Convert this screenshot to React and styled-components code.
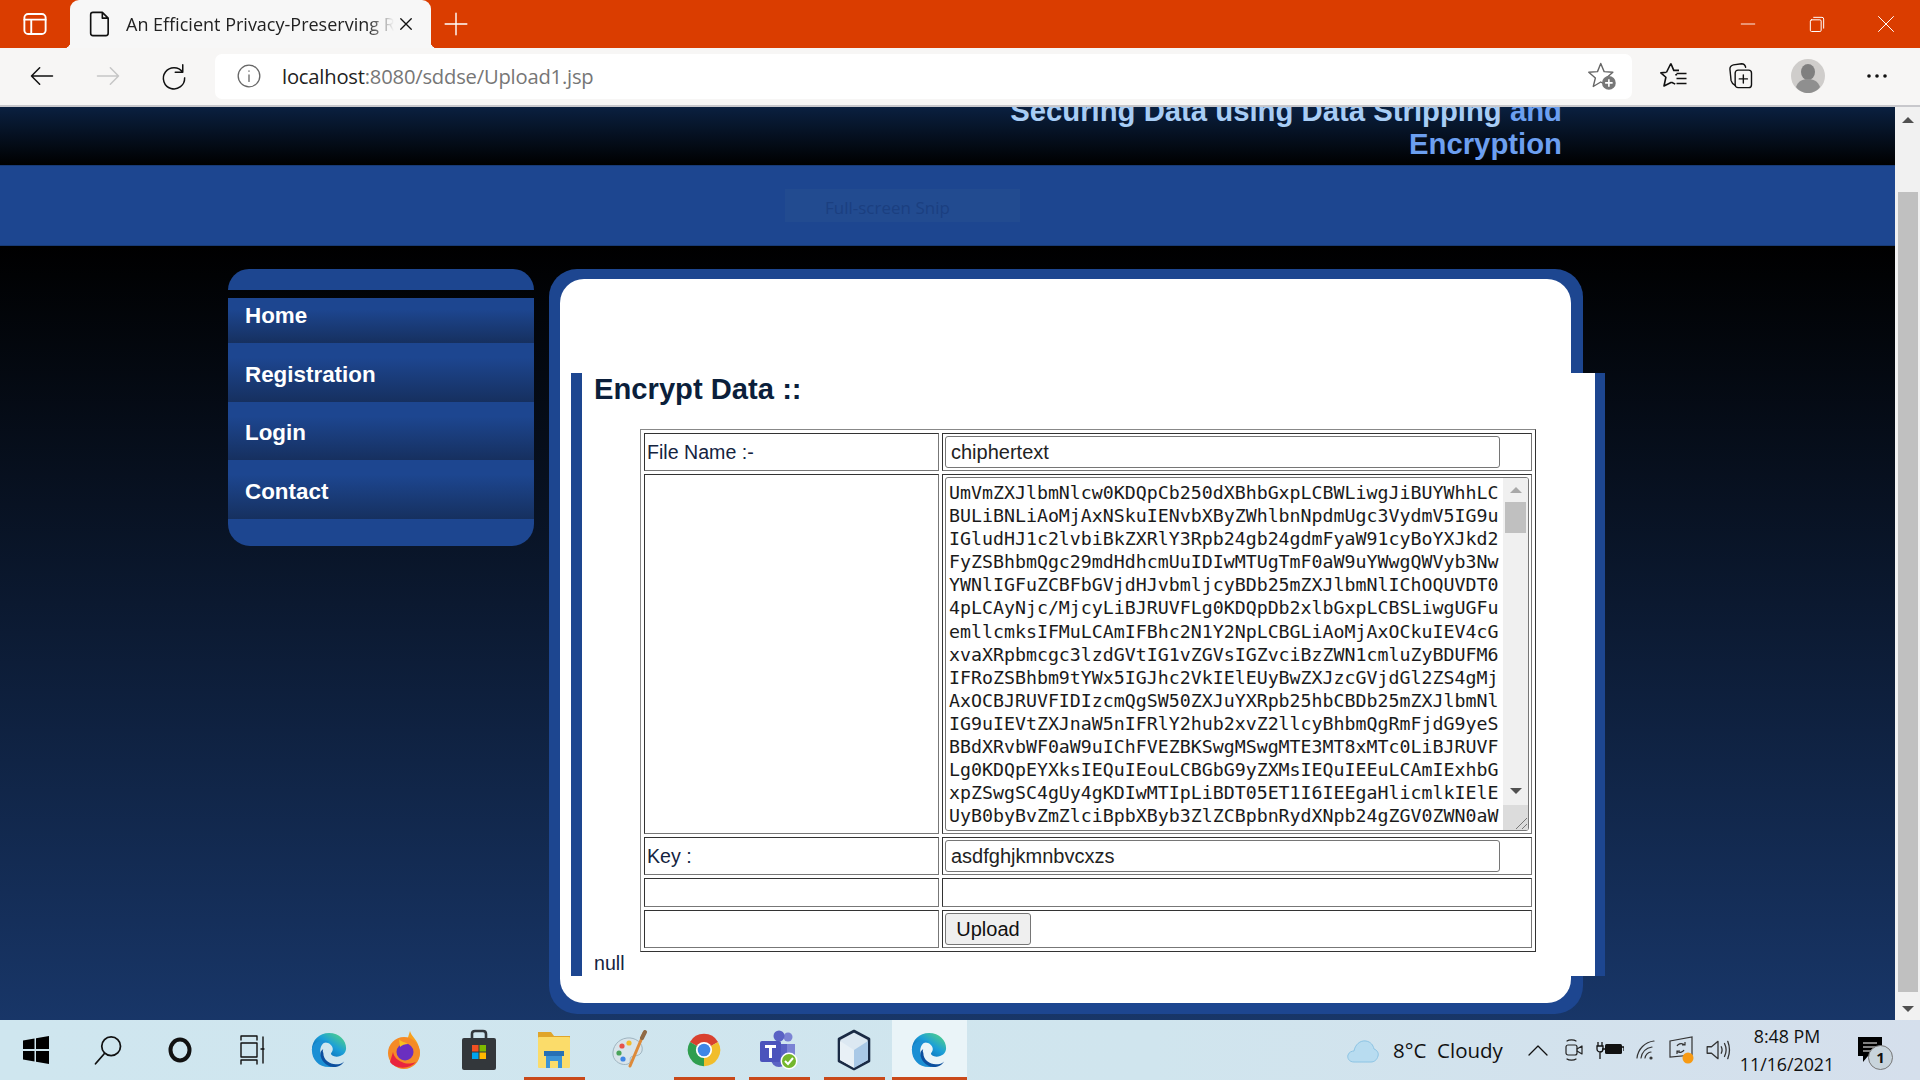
import React from 'react';
import styled, { createGlobalStyle } from 'styled-components';

const GlobalStyle = createGlobalStyle`
    * { box-sizing: border-box; }
    html, body { margin: 0; padding: 0; overflow: hidden; }
    body { font-family: "Liberation Sans", Arial, sans-serif; }
    #root { width: 1920px; height: 1080px; }
`;

const Screen = styled.div`
    width: 1920px;
    height: 1080px;
    display: flex;
    flex-direction: column;
    overflow: hidden;
`;

/* ---- browser chrome ---- */
const TitleBar = styled.div`
    height: 48px;
    flex: none;
    display: flex;
    align-items: stretch;
    background: #da3d00;
`;

const TitleSlot = styled.div`
    width: ${props => props.$w}px;
    flex: none;
    display: flex;
    align-items: center;
    justify-content: center;
`;

const Spacer = styled.div`
    flex: 1;
`;

const Tab = styled.div`
    width: 361px;
    flex: none;
    margin-top: 0;
    position: relative;
    display: flex;
    align-items: center;
    padding-left: 18px;
    background: #f7f7f7;
    border-radius: 9px 9px 0 0;
    &::before, &::after {
        content: "";
        position: absolute;
        bottom: 0;
        width: 6px;
        height: 6px;
    }
    &::before {
        left: -6px;
        background: radial-gradient(circle at 0 0, transparent 6px, #f7f7f7 6.5px);
    }
    &::after {
        right: -6px;
        background: radial-gradient(circle at 100% 0, transparent 6px, #f7f7f7 6.5px);
    }
`;

const TabTitle = styled.span`
    width: 268px;
    margin-left: 14px;
    font-family: "Open Sans", sans-serif;
    font-size: 18px;
    color: #222;
    white-space: nowrap;
    overflow: hidden;
    -webkit-mask-image: linear-gradient(90deg, #000 90%, transparent 100%);
    mask-image: linear-gradient(90deg, #000 90%, transparent 100%);
`;

const TabClose = styled.div`
    margin-left: 3px;
    display: flex;
`;

const ToolBar = styled.div`
    height: 59px;
    flex: none;
    display: flex;
    align-items: center;
    padding: 0 9px 1px 8px;
    background: #f7f6f5;
    border-bottom: 2px solid #c8c8cc;
`;

const ToolSlot = styled.div`
    width: ${props => props.$w || 67}px;
    flex: none;
    display: flex;
    align-items: center;
    justify-content: center;
`;

const AddressBar = styled.div`
    width: 1417px;
    height: 45px;
    flex: none;
    margin: 0 8px 0 8px;
    display: flex;
    align-items: center;
    padding: 0 15px 0 21px;
    background: #fff;
    border-radius: 7px;
`;

const Url = styled.div`
    flex: 1;
    margin-left: 20px;
    font-family: "Open Sans", sans-serif;
    font-size: 20.2px;
    letter-spacing: -0.2px;
    color: #222;
    span { color: #767676; }
`;

/* ---- page ---- */
const PageArea = styled.div`
    flex: 1;
    min-height: 0;
    display: flex;
`;

const Page = styled.div`
    flex: 1;
    min-width: 0;
    display: flex;
    flex-direction: column;
`;

const Header = styled.div`
    height: 58px;
    flex: none;
    overflow: hidden;
    display: flex;
    align-items: flex-end;
    justify-content: flex-end;
    padding: 0 333px 5px 0;
    background: linear-gradient(#0a2040, #000);
`;

const SiteTitle = styled.div`
    font-size: 29.3px;
    font-weight: bold;
    line-height: 33px;
    text-align: right;
    color: #a8cdf5;
    white-space: nowrap;
    span { color: #6c9ff0; }
`;

const Band = styled.div`
    height: 81px;
    flex: none;
    display: flex;
    align-items: center;
    padding-left: 785px;
    background: #1d4690;
    border-top: 1px solid #173a75;
    border-bottom: 1px solid #173a75;
`;

const SnipBar = styled.div`
    width: 235px;
    height: 33px;
    display: flex;
    align-items: center;
    padding: 3px 0 0 40px;
    background: #224b90;
    font-family: "Open Sans", sans-serif;
    font-size: 17px;
    color: #1b3f80;
`;

const Body = styled.div`
    flex: 1;
    min-height: 0;
    display: flex;
    align-items: flex-start;
    gap: 15px;
    padding: 23px 0 0 228px;
    background: linear-gradient(#000, #183668);
`;

const SideNav = styled.nav`
    width: 306px;
    flex: none;
`;

const NavCap = styled.div`
    height: ${props => props.$bottom ? 27 : 21}px;
    margin-bottom: ${props => props.$bottom ? 0 : 8}px;
    background: #1d4690;
    border-radius: ${props => props.$bottom ? '0 0 22px 22px' : '22px 22px 0 0'};
`;

const NavItem = styled.a`
    display: block;
    padding: ${props => props.$first ? 5 : 18.5}px 0 14px 17px;
    font-size: 22.4px;
    font-weight: bold;
    line-height: 26px;
    color: #fff;
    background: linear-gradient(#1d4690 25%, #16305f);
`;

const MainPanel = styled.div`
    width: 1034px;
    height: 745px;
    flex: none;
    padding: 10px 12px 11px 11px;
    background: #1d4690;
    border-radius: 28px;
`;

const WhitePanel = styled.div`
    height: 100%;
    padding: 94px 0 0 11px;
    background: #fff;
    border-radius: 24px;
`;

const ContentBlock = styled.div`
    width: 1034px;
    height: 603px;
    padding-left: 12px;
    background: #fff;
    border-left: 11px solid #1d4690;
    border-right: 10px solid #1d4690;
`;

const Heading = styled.h2`
    margin: 0 0 23px;
    font-size: 29.2px;
    font-weight: bold;
    line-height: 33px;
    color: #0b1f3b;
`;

const FormTable = styled.table`
    width: 896px;
    height: 523px;
    margin-left: 46px;
    table-layout: fixed;
    border-collapse: separate;
    border-spacing: 3px;
    border: 1px solid;
    border-color: #888 #333 #333 #888;
`;

const Cell = styled.td`
    height: ${props => props.$h}px;
    padding: 2px;
    vertical-align: middle;
    font-size: 19.6px;
    color: #14233f;
    border: 1px solid;
    border-color: #333 #777 #777 #333;
`;

const TextInput = styled.input`
    display: block;
    width: 555px;
    height: 32px;
    padding: 0 5px;
    border: 1px solid #767676;
    border-radius: 3px;
    background: #fff;
    font-family: "Liberation Sans", Arial, sans-serif;
    font-size: 20px;
    color: #222;
    outline: none;
`;

const TextBox = styled.div`
    width: 584px;
    height: 354px;
    display: flex;
    border: 1px solid #767676;
    border-radius: 3px;
    overflow: hidden;
`;

const BoxText = styled.div`
    flex: 1;
    padding: 3px 0 0 3px;
    overflow: hidden;
    font-family: "DejaVu Sans Mono", monospace;
    font-size: 18.25px;
    line-height: 23.1px;
    color: #1a1a1a;
    white-space: pre;
`;

const BoxScroll = styled.div`
    width: 25px;
    flex: none;
    display: flex;
    flex-direction: column;
    align-items: center;
    background: #f0f0f0;
`;

const Arrow = styled.div`
    width: 0;
    height: 0;
    flex: none;
    margin: ${props => props.$m};
    border-left: ${props => props.$s}px solid transparent;
    border-right: ${props => props.$s}px solid transparent;
    ${props => props.$down ? 'border-top' : 'border-bottom'}: ${props => props.$s}px solid ${props => props.$c};
`;

const Thumb = styled.div`
    width: ${props => props.$w}px;
    height: ${props => props.$h}px;
    flex: none;
    margin-top: ${props => props.$top}px;
    background: #c0c0c0;
`;

const Grip = styled.div`
    width: 25px;
    height: 25px;
    flex: none;
    margin-top: auto;
    display: flex;
    align-items: flex-end;
    justify-content: flex-end;
    background: #dcdcdc;
`;

const UploadButton = styled.button`
    display: block;
    width: 86px;
    height: 32px;
    padding: 0;
    background: #efefef;
    border: 1px solid #767676;
    border-radius: 3px;
    font-family: "Liberation Sans", Arial, sans-serif;
    font-size: 20px;
    color: #111;
`;

const NullText = styled.div`
    font-size: 19.6px;
    line-height: 23px;
    color: #14233f;
`;

const PageScroll = styled.div`
    width: 25px;
    flex: none;
    display: flex;
    flex-direction: column;
    align-items: center;
    background: #f1f1f1;
`;

/* ---- taskbar ---- */
const TaskBar = styled.div`
    height: 60px;
    flex: none;
    display: flex;
    align-items: stretch;
    background: linear-gradient(90deg, #cfe6ef, #d0e5ee 60%, #d5dfec);
`;

const SysSlot = styled.div`
    width: 72px;
    flex: none;
    display: flex;
    align-items: center;
    justify-content: center;
`;

const AppSlot = styled.div`
    width: 75px;
    flex: none;
    position: relative;
    display: flex;
    align-items: center;
    justify-content: center;
    background: ${props => props.$active ? '#eaf4f8' : 'transparent'};
    ${props => props.$running && `
        &::after {
            content: "";
            position: absolute;
            bottom: 0;
            left: ${props.$active ? 0 : 7}px;
            right: ${props.$active ? 0 : 7}px;
            height: 3px;
            background: #c9491a;
        }
    `}
`;

const AppGroup = styled.div`
    display: flex;
    margin-left: 3.5px;
`;

const Tray = styled.div`
    margin-left: auto;
    display: flex;
    align-items: center;
    padding-right: 18px;
`;

const Weather = styled.div`
    width: 110px;
    margin: 0 17px 0 13px;
    font-family: "Open Sans", sans-serif;
    font-size: 20.5px;
    color: #111;
    white-space: pre;
`;

const TraySlot = styled.div`
    width: 36px;
    flex: none;
    display: flex;
    justify-content: center;
`;

const Clock = styled.div`
    width: 102px;
    flex: none;
    font-family: "Open Sans", sans-serif;
    font-size: 17.8px;
    line-height: 28px;
    color: #111;
    text-align: center;
    white-space: nowrap;
`;

const NotifySlot = styled.div`
    width: 64px;
    flex: none;
    position: relative;
    display: flex;
    justify-content: center;
`;

const NotifyBadge = styled.div`
    position: absolute;
    left: 30px;
    top: 9px;
    width: 25px;
    height: 25px;
    border-radius: 50%;
    border: 1.5px solid #777;
    background: #c8d4dc;
    font-family: "Open Sans", sans-serif;
    font-size: 15px;
    font-weight: bold;
    line-height: 22px;
    text-align: center;
    color: #111;
`;

/* ---- icons ---- */
const Line = ({ w = 24, h = 24, c = '#111', sw = 1.6, children, vb = '0 0 24 24' }) => (
    <svg width={w} height={h} viewBox={vb} fill="none" stroke={c} strokeWidth={sw} strokeLinecap="round" strokeLinejoin="round">
        {children}
    </svg>
);

const EdgeIcon = ({ id }) => (
    <svg width="38" height="38" viewBox="0 0 40 40">
        <defs>
            <linearGradient id={`edgeA${id}`} x1="0.1" y1="0.9" x2="0.9" y2="0.1">
                <stop offset="0" stopColor="#0a5fb0" />
                <stop offset="0.55" stopColor="#1c9fd8" />
                <stop offset="1" stopColor="#4fd08a" />
            </linearGradient>
        </defs>
        <path fill={`url(#edgeA${id})`} d="M2 20C2 9 10 2 20 2c11 0 18 8 18 16 0 6-5 9-10 9-4 0-6-2-6-3 0-1 2-2 2-5 0-4-4-7-8-7-7 0-12 5-12 8z" />
        <path fill="#1b8fd4" d="M2 20c0-6 6-10 12-10 4 0 6 1 6 1-7 0-10 6-9 12 1 7 7 13 13 14-1 1-3 1-4 1C9 38 2 30 2 20z" />
        <path fill="#0c4f9e" d="M14 23c0 8 7 12 13 12 4 0 7-1 9-3-3 5-9 6-12 6-7-1-13-7-13-14 0-2 1-4 3-5-.6 1-.7 3 0 4z" />
    </svg>
);

const ChromeIcon = () => (
    <svg width="36" height="38" viewBox="0 0 40 40">
        <path fill="#d9412f" d="M20 20 4.4 11A18 18 0 0 1 35.6 11z" />
        <path fill="#f1bd2b" d="M20 20 35.6 11A18 18 0 0 1 20 38z" />
        <path fill="#2f9e4f" d="M20 20 20 38A18 18 0 0 1 4.4 11z" />
        <circle cx="20" cy="20" r="9" fill="#fff" />
        <circle cx="20" cy="20" r="7" fill="#3f86e6" />
    </svg>
);

const FirefoxIcon = () => (
    <svg width="36" height="40" viewBox="0 0 36 40">
        <path fill="#f7a01e" d="M24 1c1 5 8 9 9 17 1 3 1 6 0 9L18 20z" />
        <circle cx="18" cy="23" r="16" fill="#f58a26" />
        <path fill="#e9243f" d="M4 32c5 7 19 8 26 0-6 2-10 2-14 0-5-2-8-5-9-10z" />
        <circle cx="19" cy="22" r="8.5" fill="#6a2fc0" />
        <path fill="#f7c01e" d="M13 9c2 3 6 3 9 5-3 0-6 1-8 3z" />
    </svg>
);

const StoreIcon = () => (
    <svg width="36" height="42" viewBox="0 0 36 42">
        <path fill="none" stroke="#33373b" strokeWidth="2.6" d="M11 11V5c0-2 1-3 3-3h8c2 0 3 1 3 3v6" />
        <rect x="1" y="9" width="34" height="32" rx="2" fill="#33373b" />
        <rect x="11" y="16" width="6.5" height="6.5" fill="#f25022" />
        <rect x="18.5" y="16" width="6.5" height="6.5" fill="#7fba00" />
        <rect x="11" y="23.5" width="6.5" height="6.5" fill="#00a4ef" />
        <rect x="18.5" y="23.5" width="6.5" height="6.5" fill="#ffb900" />
    </svg>
);

const FilesIcon = () => (
    <svg width="34" height="38" viewBox="0 0 34 38">
        <path fill="#e0a52a" d="M1 1h13l3 4h16v8H1z" />
        <rect x="1" y="6" width="32" height="31" rx="1" fill="#fbdc6a" />
        <path fill="#3b93d6" d="M9 24h16v13h-4v-7h-8v7H9z" />
        <path fill="#2670b5" d="M7 20h20v5H7z" />
    </svg>
);

const PaintIcon = () => (
    <svg width="38" height="40" viewBox="0 0 38 40">
        <path fill="#d8e4ea" stroke="#9eb4c0" d="M17 8C8 9 2 17 3 25c1 7 9 11 15 9 4-2 1-5 3-7 3-2 9 0 11-6 2-8-7-14-15-13z" />
        <circle cx="12" cy="16" r="2.6" fill="#e6534a" />
        <circle cx="19" cy="13" r="2.6" fill="#f1bd2b" />
        <circle cx="9" cy="23" r="2.6" fill="#4aa35a" />
        <circle cx="13" cy="29" r="2.6" fill="#3f86e6" />
        <path stroke="#dd8a3a" strokeWidth="3" strokeLinecap="round" d="M34 3 20 36" />
        <path stroke="#8f6a45" strokeWidth="4" strokeLinecap="round" d="M35 2l-3 6" />
    </svg>
);

const TeamsIcon = () => (
    <svg width="40" height="40" viewBox="0 0 40 40">
        <circle cx="29" cy="7" r="4.5" fill="#7b83d4" />
        <circle cx="20" cy="6" r="5.5" fill="#5a62c4" />
        <path fill="#7b83d4" d="M24 14h12v12a6 6 0 0 1-12 0z" />
        <path fill="#5a62c4" d="M12 14h16v15a8 8 0 0 1-16 0z" />
        <rect x="1" y="11" width="21" height="21" rx="2" fill="#4b53bc" />
        <path fill="#fff" d="M6 15h11v3h-4v10h-3V18H6z" />
        <circle cx="30" cy="31" r="8.5" fill="#fff" />
        <circle cx="30" cy="31" r="7" fill="#74b72c" />
        <path fill="none" stroke="#fff" strokeWidth="2" d="M26 31l3 3 5-6" />
    </svg>
);

const BoxIcon = () => (
    <svg width="34" height="42" viewBox="0 0 34 42">
        <path fill="#dce8f2" stroke="#1a2a44" strokeWidth="2.6" strokeLinejoin="round" d="M17 2 32 10v22L17 40 2 32V10z" />
        <path fill="#a9c8e6" d="M17 21 31 12v19L17 39z" />
        <path fill="#e8f0f6" d="M17 21 3 12v19l14 8z" />
    </svg>
);

const CloudIcon = () => (
    <svg width="34" height="28" viewBox="0 0 34 28">
        <path fill="#b8dcf0" stroke="#8cc4e4" d="M8 26C3 26 1 22 2 19c1-3 4-4 6-4 1-6 6-11 12-10 5 1 7 4 8 8 3 1 5 4 4 7-1 4-4 6-7 6z" />
    </svg>
);

const refs = [
    'UmVmZXJlbmNlcw0KDQpCb250dXBhbGxpLCBWLiwgJiBUYWhhLC',
    'BULiBNLiAoMjAxNSkuIENvbXByZWhlbnNpdmUgc3VydmV5IG9u',
    'IGludHJ1c2lvbiBkZXRlY3Rpb24gb24gdmFyaW91cyBoYXJkd2',
    'FyZSBhbmQgc29mdHdhcmUuIDIwMTUgTmF0aW9uYWwgQWVyb3Nw',
    'YWNlIGFuZCBFbGVjdHJvbmljcyBDb25mZXJlbmNlIChOQUVDT0',
    '4pLCAyNjc/MjcyLiBJRUVFLg0KDQpDb2xlbGxpLCBSLiwgUGFu',
    'emllcmksIFMuLCAmIFBhc2N1Y2NpLCBGLiAoMjAxOCkuIEV4cG',
    'xvaXRpbmcgc3lzdGVtIG1vZGVsIGZvciBzZWN1cmluZyBDUFM6',
    'IFRoZSBhbm9tYWx5IGJhc2VkIElEUyBwZXJzcGVjdGl2ZS4gMj',
    'AxOCBJRUVFIDIzcmQgSW50ZXJuYXRpb25hbCBDb25mZXJlbmNl',
    'IG9uIEVtZXJnaW5nIFRlY2hub2xvZ2llcyBhbmQgRmFjdG9yeS',
    'BBdXRvbWF0aW9uIChFVEZBKSwgMSwgMTE3MT8xMTc0LiBJRUVF',
    'Lg0KDQpEYXksIEQuIEouLCBGbG9yZXMsIEQuIEEuLCAmIExhbG',
    'xpZSwgSC4gUy4gKDIwMTIpLiBDT05ET1I6IEEgaHlicmlkIElE',
    'UyB0byBvZmZlciBpbXByb3ZlZCBpbnRydXNpb24gZGV0ZWN0aW',
];

const navLinks = ['Home', 'Registration', 'Login', 'Contact'];

const noop = () => {};

export default function App() {
    return (
        <Screen>
            <GlobalStyle />
            <TitleBar>
                <TitleSlot $w={70}>
                    <Line w={30} h={30} c="#fff" sw={1.5}>
                        <rect x="3.5" y="4" width="17" height="16" rx="3" />
                        <path d="M3.5 8.5h17M9 8.5V20" />
                    </Line>
                </TitleSlot>
                <Tab>
                    <Line w={24} h={28} c="#111" sw={1.4} vb="0 0 20 24">
                        <path d="M4 2h8l5 5v13a2 2 0 0 1-2 2H4a2 2 0 0 1-2-2V4a2 2 0 0 1 2-2zM12 2v5h5" />
                    </Line>
                    <TabTitle>An Efficient Privacy-Preserving Ra</TabTitle>
                    <TabClose>
                        <Line w={18} h={18} sw={1.8}><path d="M5 5l14 14M19 5 5 19" /></Line>
                    </TabClose>
                </Tab>
                <TitleSlot $w={50}>
                    <Line w={26} h={26} c="#fff" sw={1.3}><path d="M12 2v20M2 12h20" /></Line>
                </TitleSlot>
                <Spacer />
                <TitleSlot $w={69}>
                    <Line w={18} h={18} c="#fff" sw={1.2}><path d="M3 12h18" /></Line>
                </TitleSlot>
                <TitleSlot $w={69}>
                    <Line w={20} h={20} c="#fff" sw={1.2}>
                        <rect x="4" y="7" width="13" height="14" rx="1.5" />
                        <path d="M8 4h10a2 2 0 0 1 2 2v11" />
                    </Line>
                </TitleSlot>
                <TitleSlot $w={69}>
                    <Line w={20} h={20} c="#fff" sw={1.2}><path d="M3 3l18 18M21 3 3 21" /></Line>
                </TitleSlot>
            </TitleBar>

            <ToolBar>
                <ToolSlot $w={67}>
                    <Line w={28} h={28} sw={1.3}><path d="M21 12H3M10 5l-7 7 7 7" /></Line>
                </ToolSlot>
                <ToolSlot $w={66}>
                    <Line w={28} h={28} c="#c6c6c6" sw={1.3}><path d="M3 12h18M14 5l7 7-7 7" /></Line>
                </ToolSlot>
                <ToolSlot $w={66}>
                    <Line w={30} h={30} sw={1.2}><path d="M19 3v6h-6M19 9a8.500 8.500 0 1 0 1.500 4.500" /></Line>
                </ToolSlot>
                <AddressBar>
                    <Line w={26} h={26} c="#666" sw={1.2}>
                        <circle cx="12" cy="12" r="10" />
                        <path d="M12 11v6M12 7.2v.4" />
                    </Line>
                    <Url>localhost<span>:8080/sddse/Upload1.jsp</span></Url>
                    <svg width="30" height="30" viewBox="0 0 24 24">
                        <path fill="none" stroke="#666" strokeWidth="1.1" strokeLinejoin="round" d="M11 2l2.7 6.5 7 .5-5.3 4.6 1.7 6.8L11 16.8 5 20.4l1.7-6.8L1.400 9l7-.5z" />
                        <circle cx="17.500" cy="17.500" r="5.500" fill="#777" />
                        <path stroke="#fff" strokeWidth="1.3" d="M17.500 14.500v6M14.500 17.500h6" />
                    </svg>
                </AddressBar>
                <ToolSlot>
                    <svg width="30" height="30" viewBox="0 0 24 24" fill="none" stroke="#111" strokeWidth="1.3" strokeLinejoin="round">
                        <path d="M9.500 2l2.300 5.500H16M13 11l1.500 0M6 9 1.500 9.500 5.500 13l-1.500 7L10 17M10 17l3 1.500M6 9l3.500-7" />
                        <path d="M14 10h8M14 14h8M14 18h8" />
                    </svg>
                </ToolSlot>
                <ToolSlot>
                    <Line w={28} h={28} sw={1.2}>
                        <rect x="7" y="7" width="14" height="15" rx="2.500" />
                        <path d="M14 11v7M10.500 14.500h7M7 20C5 19 4 18 3.500 16L2.500 6c0-2 1-3 3-3.500l7-1c1.500 0 3 1 3.500 3" />
                    </Line>
                </ToolSlot>
                <ToolSlot>
                    <svg width="34" height="34" viewBox="0 0 34 34">
                        <circle cx="17" cy="17" r="17" fill="#cfcdcb" />
                        <ellipse cx="17" cy="13" rx="7" ry="8" fill="#7f7f7f" />
                        <path fill="#8f8f8f" d="M5 28c2-6 7-8 12-8s10 2 12 8c-3 4-8 6-12 6s-9-2-12-6z" />
                    </svg>
                </ToolSlot>
                <ToolSlot $w={71}>
                    <svg width="24" height="8" viewBox="0 0 24 8">
                        <circle cx="4" cy="4" r="1.800" fill="#111" />
                        <circle cx="12" cy="4" r="1.800" fill="#111" />
                        <circle cx="20" cy="4" r="1.800" fill="#111" />
                    </svg>
                </ToolSlot>
            </ToolBar>

            <PageArea>
                <Page>
                    <Header>
                        <SiteTitle>
                            Securing Data using Data Stripping <span>and<br />Encryption</span>
                        </SiteTitle>
                    </Header>
                    <Band>
                        <SnipBar>Full-screen Snip</SnipBar>
                    </Band>
                    <Body>
                        <SideNav>
                            <NavCap />
                            {navLinks.map((name, i) => (
                                <NavItem key={name} $first={i === 0}>{name}</NavItem>
                            ))}
                            <NavCap $bottom />
                        </SideNav>
                        <MainPanel>
                            <WhitePanel>
                                <ContentBlock>
                                    <Heading>Encrypt Data ::</Heading>
                                    <FormTable>
                                        <colgroup>
                                            <col style={{ width: 295 }} />
                                            <col />
                                        </colgroup>
                                        <tbody>
                                            <tr>
                                                <Cell $h={38}>File Name :-</Cell>
                                                <Cell $h={38}><TextInput value="chiphertext" onChange={noop} /></Cell>
                                            </tr>
                                            <tr>
                                                <Cell $h={360}></Cell>
                                                <Cell $h={360}>
                                                    <TextBox>
                                                        <BoxText>{refs.join('\n')}</BoxText>
                                                        <BoxScroll>
                                                            <Arrow $s={6} $c="#a8a8a8" $m="9px 0 0" />
                                                            <Thumb $w={21} $h={31} $top={9} />
                                                            <Arrow $s={6} $c="#505050" $down $m="255px 0 0" />
                                                            <Grip>
                                                                <svg width="16" height="16" viewBox="0 0 16 16">
                                                                    <path stroke="#777" d="M15 4 4 15M15 10l-5 5" />
                                                                </svg>
                                                            </Grip>
                                                        </BoxScroll>
                                                    </TextBox>
                                                </Cell>
                                            </tr>
                                            <tr>
                                                <Cell $h={38}>Key :</Cell>
                                                <Cell $h={38}><TextInput value="asdfghjkmnbvcxzs" onChange={noop} /></Cell>
                                            </tr>
                                            <tr>
                                                <Cell $h={29}></Cell>
                                                <Cell $h={29}></Cell>
                                            </tr>
                                            <tr>
                                                <Cell $h={38}></Cell>
                                                <Cell $h={38}><UploadButton>Upload</UploadButton></Cell>
                                            </tr>
                                        </tbody>
                                    </FormTable>
                                    <NullText>null</NullText>
                                </ContentBlock>
                            </WhitePanel>
                        </MainPanel>
                    </Body>
                </Page>
                <PageScroll>
                    <Arrow $s={6} $c="#505050" $m="10px 0 0" />
                    <Thumb $w={20} $h={800} $top={69} />
                    <Arrow $s={6} $c="#505050" $down $m="auto 0 8px" />
                </PageScroll>
            </PageArea>

            <TaskBar>
                <SysSlot>
                    <svg width="26" height="28" viewBox="0 0 26 28">
                        <path fill="#000" d="M0 4.500 11.500 2.500V13H0zM13 2.200 26 0V13H13zM0 15h11.500v10.500L0 23.500zM13 15h13v13l-13-2.200z" />
                    </svg>
                </SysSlot>
                <SysSlot>
                    <Line w={30} h={32} sw={1.4}>
                        <circle cx="14.500" cy="9" r="7.500" />
                        <path d="M9 15 2 23" />
                    </Line>
                </SysSlot>
                <SysSlot>
                    <svg width="24" height="26" viewBox="0 0 24 26">
                        <ellipse cx="12" cy="13" rx="9.500" ry="10.500" fill="none" stroke="#111" strokeWidth="4" />
                    </svg>
                </SysSlot>
                <SysSlot>
                    <Line w={26} h={30} sw={1.4} vb="0 0 26 30">
                        <path d="M2 5V1h16v4M2 25v4M18 25v4M2 25h16M2 8h16v14H2zM24 2v26M22 14h3" />
                    </Line>
                </SysSlot>
                <AppGroup>
                    <AppSlot><EdgeIcon id="a" /></AppSlot>
                    <AppSlot><FirefoxIcon /></AppSlot>
                    <AppSlot><StoreIcon /></AppSlot>
                    <AppSlot $running><FilesIcon /></AppSlot>
                    <AppSlot><PaintIcon /></AppSlot>
                    <AppSlot $running><ChromeIcon /></AppSlot>
                    <AppSlot $running><TeamsIcon /></AppSlot>
                    <AppSlot $running><BoxIcon /></AppSlot>
                    <AppSlot $running $active><EdgeIcon id="b" /></AppSlot>
                </AppGroup>
                <Tray>
                    <CloudIcon />
                    <Weather>8°C  Cloudy</Weather>
                    <TraySlot>
                        <Line w={24} h={24} sw={1.3}><path d="M3 17l9-9 9 9" /></Line>
                    </TraySlot>
                    <TraySlot>
                        <Line w={24} h={28} c="#222" sw={1.2}>
                            <rect x="4" y="7" width="11" height="10" rx="2" />
                            <path d="M15 11l5-3v8l-5-3M5 3c2-1.500 7-1.500 9 0M5 21c2 1.500 7 1.500 9 0" />
                        </Line>
                    </TraySlot>
                    <TraySlot>
                        <svg width="28" height="22" viewBox="0 0 28 22">
                            <rect x="9" y="5" width="17" height="10" rx="1.500" fill="#111" />
                            <path fill="none" stroke="#111" strokeWidth="1.300" d="M26 8h2v4M6 10h3M2 3v4M6 3v4M1 7h6v3a3 3 0 0 1-6 0zM4 13v7" />
                        </svg>
                    </TraySlot>
                    <TraySlot>
                        <Line w={24} h={24} c="#333" sw={1.2}>
                            <path d="M3 20C4 11 11 4 20 3M7 20c1-6 5-10 11-11M11 20c.5-3 3-6 6-6" />
                            <circle cx="17" cy="20" r="1" fill="#333" />
                        </Line>
                    </TraySlot>
                    <TraySlot>
                        <svg width="26" height="28" viewBox="0 0 26 28">
                            <path fill="none" stroke="#333" strokeWidth="1.200" d="M1 5 23 1v18L1 21z" />
                            <path fill="none" stroke="#333" strokeWidth="1.200" d="M8 10c1-2 4-3 6-2l2 1M16 6v3h-3M15 14c-1 2-4 3-6 2l-1-1M8 18v-3h3" />
                            <circle cx="19" cy="22" r="5.500" fill="#f79a13" />
                        </svg>
                    </TraySlot>
                    <TraySlot>
                        <Line w={26} h={26} c="#333" sw={1.2}>
                            <path d="M2 9h4l6-5v16l-6-5H2zM15 9c1 2 1 4 0 6M18 6c2 4 2 8 0 12M21 4c2 5 2 11 0 16" />
                        </Line>
                    </TraySlot>
                    <Clock>8:48 PM<br />11/16/2021</Clock>
                    <NotifySlot>
                        <svg width="26" height="28" viewBox="0 0 26 28">
                            <path fill="#000" d="M1 1h24v19H11l-5 6v-6H1z" />
                            <path stroke="#fff" strokeWidth="1.200" d="M6 7h14M6 11h14M6 15h9" />
                        </svg>
                        <NotifyBadge>1</NotifyBadge>
                    </NotifySlot>
                </Tray>
            </TaskBar>
        </Screen>
    );
}
